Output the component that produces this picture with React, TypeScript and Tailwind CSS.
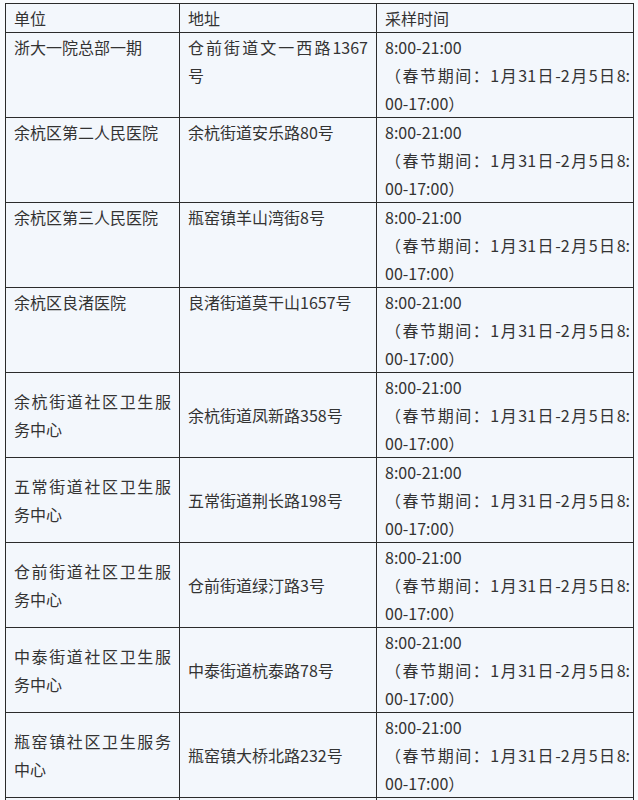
const rows: { unit: string[]; addr: string[]; middle: boolean }[] = [
  { unit: ['浙大一院总部一期'], addr: ['仓前街道文一西路1367', '号'], middle: false },
  { unit: ['余杭区第二人民医院'], addr: ['余杭街道安乐路80号'], middle: false },
  { unit: ['余杭区第三人民医院'], addr: ['瓶窑镇羊山湾街8号'], middle: false },
  { unit: ['余杭区良渚医院'], addr: ['良渚街道莫干山1657号'], middle: false },
  { unit: ['余杭街道社区卫生服', '务中心'], addr: ['余杭街道凤新路358号'], middle: true },
  { unit: ['五常街道社区卫生服', '务中心'], addr: ['五常街道荆长路198号'], middle: true },
  { unit: ['仓前街道社区卫生服', '务中心'], addr: ['仓前街道绿汀路3号'], middle: true },
  { unit: ['中泰街道社区卫生服', '务中心'], addr: ['中泰街道杭泰路78号'], middle: true },
  { unit: ['瓶窑镇社区卫生服务', '中心'], addr: ['瓶窑镇大桥北路232号'], middle: true },
];

// a wrapped paragraph: every line but the last is justified to the cell width
function Para({ lines }: { lines: string[] }) {
  return (
    <>
      {lines.map((t, i) => (
        <div
          key={i}
          className={i < lines.length - 1 ? 'text-justify [text-align-last:justify]' : 'text-left'}
        >
          {t}
        </div>
      ))}
    </>
  );
}

export default function App() {
  const border = 'border border-[#2b2b2b]';
  const cell = `${border} pl-2 h-[85px]`;
  return (
    <div
      lang="zh-CN"
      className="w-[638px] h-[800px] overflow-hidden bg-[#f9fbfe] pt-[3px] pl-[5px] text-[16px] leading-[28px] text-[#333333]"
      style={{ fontFamily: '"Noto Sans CJK SC", "Noto Sans", sans-serif' }}
    >
      <table className="border-collapse table-fixed w-[628px] bg-[#f3f7fc]">
        <colgroup>
          <col className="w-[174px]" />
          <col className="w-[197px]" />
          <col className="w-[257px]" />
        </colgroup>
        <thead>
          <tr className="align-top">
            <td className={`${border} pl-2 h-[29px]`}>单位</td>
            <td className={`${border} pl-2`}>地址</td>
            <td className={`${border} pl-2`}>采样时间</td>
          </tr>
        </thead>
        <tbody>
          {rows.map((r, i) => (
            <tr key={i} className={r.middle ? 'align-middle' : 'align-top'}>
              <td className={`${cell} pr-2`}>
                <Para lines={r.unit} />
              </td>
              <td className={`${cell} pr-2`}>
                <Para lines={r.addr} />
              </td>
              <td className={`${cell} pr-[3px]`}>
                <div>8:00-21:00</div>
                <Para lines={['（春节期间：1月31日-2月5日8:', '00-17:00）']} />
              </td>
            </tr>
          ))}
          <tr>
            <td className={cell}></td>
            <td className={cell}></td>
            <td className={cell}></td>
          </tr>
        </tbody>
      </table>
    </div>
  );
}
